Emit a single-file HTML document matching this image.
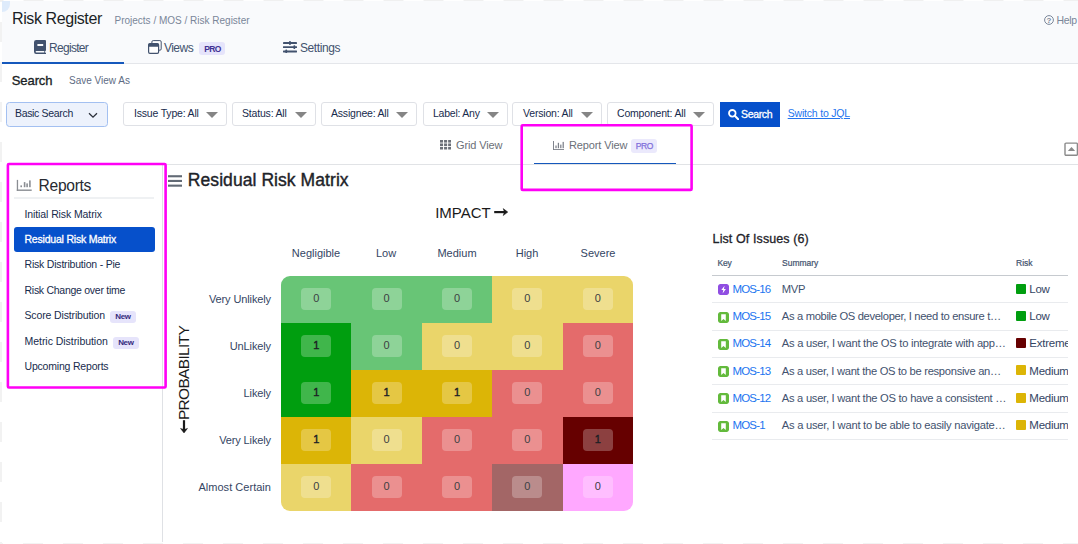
<!DOCTYPE html>
<html>
<head>
<meta charset="utf-8">
<title>Risk Register</title>
<style>
*{box-sizing:border-box;margin:0;padding:0}
html,body{width:1078px;height:544px;overflow:hidden;background:#fff}
body{font-family:"Liberation Sans",sans-serif;color:#172b4d;position:relative}
.abs{position:absolute;white-space:nowrap}
#hdr{left:2px;top:1px;width:1076px;height:63px;background:#f9fafc;border-bottom:1px solid #e4e6ea}
#corner{left:2px;top:1px;width:8px;height:11px;background:#deebfb;border-bottom-right-radius:9px}
#title{left:12px;top:9px;font-size:16px;line-height:20px;color:#1b1f26;letter-spacing:-0.41px}
#crumb{left:114.5px;top:14.7px;font-size:10px;line-height:12px;color:#7a8699}
#help{left:1056.5px;top:14px;font-size:10.5px;line-height:12px;color:#7a8699;letter-spacing:-0.3px}
.tab{font-size:12px;line-height:14px;color:#42526e;top:40.7px;letter-spacing:-0.4px}
#tabline{left:2px;top:62px;width:122px;height:2px;background:#1558bc}
.pro{display:inline-block;background:#e6e4fb;color:#403294;font-size:8.5px;font-weight:bold;letter-spacing:-0.7px;line-height:14px;height:13.4px;padding:0 4.700px 0 5.200px;border-radius:3px;vertical-align:-0.3px;margin-left:6px}
#search{left:11.8px;top:73px;font-size:13px;line-height:15px;color:#1b1f26;-webkit-text-stroke:0.35px #1b1f26;letter-spacing:-0.1px}
#saveas{left:69px;top:75px;font-size:10px;line-height:12px;color:#5e6c84}
.dd{top:102px;height:24px;letter-spacing:-0.19px;border:1px solid #dfe1e6;border-radius:3px;background:#fff;font-size:10.5px;line-height:21px;color:#172b4d;padding-left:10px}
.dd i{position:absolute;right:8px;top:9px;width:0;height:0;border-left:6px solid transparent;border-right:6px solid transparent;border-top:6px solid #858585}
#basic{left:6px;top:102px;width:102px;height:25px;border:1px solid #a3c0f1;border-radius:3.5px;background:#edf2fc;font-size:10.5px;line-height:21px;padding-left:8px;color:#172b4d;letter-spacing:-0.33px}
#sbtn{left:720px;top:102px;width:60px;height:25px;background:#0650cb;color:#fff;font-size:10.5px;-webkit-text-stroke:0.3px #fff;letter-spacing:-0.35px;line-height:24px;text-align:left;padding-left:21px}
#jql{left:787.7px;top:107px;font-size:10.5px;line-height:13px;color:#2474ee;text-decoration:underline;letter-spacing:-0.19px}
.vt{font-size:11px;line-height:14px;color:#6b6f78;top:138px;letter-spacing:-0.12px}
#hline{left:165px;top:164px;width:913px;height:1px;background:#e1e3e6}
#vline{left:162px;top:165px;width:1px;height:377px;background:#dfe1e5}
.mg{border:2px solid #ff14ec;background:transparent}
#rep{left:38.6px;top:176.6px;letter-spacing:-0.3px;font-size:15.6px;line-height:18px;color:#262a31}
#repline{left:14px;top:197.2px;width:140.400px;height:1.700px;background:#eff1f3}
.mi{left:24.5px;font-size:10.5px;line-height:13px;color:#172b4d}
#sel{left:14.1px;top:226.9px;width:140.500px;height:25.400px;background:#0650cb;border-radius:3px}
.new{display:inline-block;background:#e6e4fb;color:#352c7e;font-size:8px;font-weight:bold;letter-spacing:-0.3px;line-height:12.5px;height:12.2px;padding:0 5.500px 0 5.200px;border-radius:3px;vertical-align:0px;margin-left:5.200px}
#mtitle{left:187.8px;top:170px;font-size:17.5px;line-height:21px;color:#1e2329;-webkit-text-stroke:0.4px #1e2329;letter-spacing:0.07px}
#impact{left:435.2px;top:203.5px;font-size:15px;line-height:18px;color:#1a1a1a;letter-spacing:0}
.cl{top:247px;width:70px;text-align:center;font-size:11px;line-height:13px;color:#344563}
.rl{left:171px;width:100px;text-align:right;font-size:11px;line-height:13px;color:#344563;letter-spacing:-0.12px}
#prob{left:124px;top:364.2px;width:120px;height:18px;text-align:center;font-size:15.5px;line-height:18px;color:#1a1a1a;letter-spacing:-0.68px;transform:rotate(-90deg);transform-origin:center}
#mx{left:281px;top:276px;width:352px;height:235px;border-radius:9px;overflow:hidden}
#mx div{position:absolute}
#mx b{position:absolute;width:30px;height:21.300px;border-radius:4px;background:rgba(255,255,255,.25);font-size:11px;line-height:21px;text-align:center;font-weight:normal;color:#3c4043}
#mx b.o{-webkit-text-stroke:0.4px #1d2125;color:#1d2125}
#loi{left:712.6px;top:232px;letter-spacing:0.1px;font-size:12.5px;line-height:15px;color:#1e2329;-webkit-text-stroke:0.3px #1e2329}
.th{top:258px;font-size:8.5px;line-height:11px;color:#42526e;-webkit-text-stroke:0.2px #42526e}
#thl{left:712px;top:274.6px;width:356px;height:1.700px;background:#c6cacf}
.rw{left:712px;width:356px;height:1px;background:#e9ebee}
.k{left:732.4px;font-size:11.5px;line-height:14px;color:#1c74f0;letter-spacing:-0.8px}
.s{left:781.8px;font-size:11.2px;line-height:14px;color:#42526e;letter-spacing:-0.23px}
.r{left:1029.3px;width:38.7px;overflow:hidden;font-size:11.5px;line-height:14px;color:#344563;letter-spacing:-0.25px}
.sq{left:1016.2px;width:9.8px;height:9.8px;border-radius:1px}
.ic{left:718px;width:11px;height:11px;border-radius:2px}
</style>
</head>
<body>
<div class="abs" style="left:0;top:0;width:1.8px;height:544px;background:linear-gradient(to bottom,#fff 0,#fff 50%,#f2f2f2 50%,#f2f2f2 100%);background-size:100% 40px;background-position:0 2px"></div>
<div class="abs" style="left:0;top:0;width:1078px;height:1px;background:linear-gradient(to right,#fff 0,#fff 50%,#f0f0f0 50%,#f0f0f0 100%);background-size:40px 100%;background-position:3.5px 0"></div>
<div class="abs" style="left:0;top:542.6px;width:1078px;height:1.4px;background:linear-gradient(to right,#fff 0,#fff 50%,#f3f3f3 50%,#f3f3f3 100%);background-size:40px 100%;background-position:3px 0"></div>
<div id="hdr" class="abs"></div>
<div id="corner" class="abs"></div>
<div id="title" class="abs">Risk Register</div>
<div id="crumb" class="abs">Projects / MOS / Risk Register</div>
<svg class="abs" style="left:1044px;top:15px" width="10" height="10" viewBox="0 0 10 10"><circle cx="5" cy="5" r="4.4" fill="none" stroke="#7a8699" stroke-width="1"/><text x="5" y="7.900" font-size="8" font-family="Liberation Sans" font-weight="bold" text-anchor="middle" fill="#7a8699">?</text></svg>
<div id="help" class="abs">Help</div>

<!-- tabs -->
<svg class="abs" style="left:34px;top:40px" width="12" height="14" viewBox="0 0 12 14"><path d="M2.200 0h8.800a1 1 0 0 1 1 1v9.300a.8.8 0 0 1-.8.800v1.600h.8v1.300H2.200a2.200 2.200 0 0 1-2.200-2.200V2.200a2.200 2.200 0 0 1 2.200-2.200zM2.400 11a.8.800 0 0 0 0 1.600H10.300v-1.600zM3.400 4v2h5.800V4z" fill="#42526e" fill-rule="evenodd"/></svg>
<div class="abs tab" style="left:49px;letter-spacing:-0.69px">Register</div>
<svg class="abs" style="left:147.500px;top:40.300px" width="14" height="14" viewBox="0 0 14 14"><rect x="3.900" y="0.600" width="9.300" height="9.600" rx="1.300" fill="#fdfdfe" stroke="#42526e" stroke-width="1"/><rect x="0.600" y="3.500" width="10" height="9.800" rx="1.300" fill="#fff" stroke="#42526e" stroke-width="1.200"/><path d="M0.600 6.700V4.800a1.300 1.300 0 0 1 1.300-1.300h7.400a1.300 1.300 0 0 1 1.300 1.300V6.700z" fill="#42526e"/></svg>
<div class="abs tab" style="left:164px;letter-spacing:-0.54px">Views<span class="pro">PRO</span></div>
<svg class="abs" style="left:283.300px;top:41px" width="14" height="12" viewBox="0 0 14 12"><g fill="#42526e"><rect x="0" y="1" width="14" height="1.900" rx=".4"/><rect x="0" y="5.200" width="14" height="1.900" rx=".4"/><rect x="0" y="9.600" width="14" height="1.900" rx=".4"/><rect x="6.100" y="0" width="1.700" height="3.900" rx=".6"/><rect x="10.500" y="4.200" width="1.700" height="3.900" rx=".6"/><rect x="2.400" y="8.600" width="1.700" height="3.400" rx=".6"/></g></svg>
<div class="abs tab" style="left:300px;letter-spacing:-0.42px">Settings</div>
<div id="tabline" class="abs"></div>

<div id="search" class="abs">Search</div>
<div id="saveas" class="abs">Save View As</div>

<div id="basic" class="abs">Basic Search<svg style="position:absolute;left:81px;top:9px" width="10" height="7" viewBox="0 0 10 7"><path d="M1 1.200l4 4 4-4" fill="none" stroke="#2a2f3a" stroke-width="1.250"/></svg></div>
<div class="abs dd" style="left:123px;width:104px">Issue Type: All<i></i></div>
<div class="abs dd" style="left:232px;width:83.500px;padding-left:9px">Status: All<i></i></div>
<div class="abs dd" style="left:321px;width:96px;padding-left:9px">Assignee: All<i></i></div>
<div class="abs dd" style="left:423px;width:85px;padding-left:9px;letter-spacing:-0.24px">Label: Any<i></i></div>
<div class="abs dd" style="left:512px;width:90px">Version: All<i></i></div>
<div class="abs dd" style="left:607px;width:107px;padding-left:9px">Component: All<i></i></div>
<div id="sbtn" class="abs">Search<svg style="position:absolute;left:8px;top:7px" width="11" height="11" viewBox="0 0 11 11"><circle cx="4.300" cy="4.300" r="3.300" fill="none" stroke="#fff" stroke-width="1.800"/><path d="M6.800 6.800l3.400 3.400" stroke="#fff" stroke-width="2" stroke-linecap="round"/></svg></div>
<div id="jql" class="abs">Switch to JQL</div>

<!-- view tabs -->
<svg class="abs" style="left:440px;top:140.200px" width="11.200" height="9.500" viewBox="0 0 11 11" preserveAspectRatio="none"><g fill="#6b6f78"><rect x="0" y="0" width="3" height="3"/><rect x="4" y="0" width="3" height="3"/><rect x="8" y="0" width="3" height="3"/><rect x="0" y="4" width="3" height="3"/><rect x="4" y="4" width="3" height="3"/><rect x="8" y="4" width="3" height="3"/><rect x="0" y="8" width="3" height="3"/><rect x="4" y="8" width="3" height="3"/><rect x="8" y="8" width="3" height="3"/></g></svg>
<div class="abs vt" style="left:456px">Grid View</div>
<svg class="abs" style="left:552.5px;top:140.500px" width="11.500" height="9" viewBox="0 0 12 10" preserveAspectRatio="none"><g fill="#7b7f88"><rect x="0" y="0" width="1" height="10"/><rect x="0" y="9" width="12" height="1"/><rect x="2.500" y="5" width="1.300" height="3"/><rect x="5" y="2" width="1.300" height="6"/><rect x="7.500" y="4" width="1.300" height="4"/><rect x="10" y="1" width="1.300" height="7"/></g></svg>
<div class="abs vt" style="left:569px">Report View<span class="pro" style="background:#ebe9fc;color:#8270db;font-weight:normal;-webkit-text-stroke:0.25px #8270db;font-size:8.5px;letter-spacing:-0.4px;margin-left:3.500px;padding:0 4.300px 0 4.800px">PRO</span></div>
<div class="abs" style="left:533.5px;top:162.6px;width:142.5px;height:1.7px;background:#1558bc"></div>
<div id="hline" class="abs"></div>
<div id="vline" class="abs"></div>
<svg class="abs" style="left:1062px;top:140px" width="16" height="18" viewBox="0 0 16 18"><rect x="3" y="3.100" width="12.400" height="12.200" rx="1" fill="#fff" stroke="#8a8a8a" stroke-width="1.400"/><path d="M5.800 11.100l3.700-4.200 3.700 4.200z" fill="#8a8a8a"/></svg>

<!-- magenta highlight boxes -->
<svg class="abs" style="left:0;top:0" width="1078" height="544" viewBox="0 0 1078 544"><rect x="521.700" y="125.200" width="169.900" height="64.700" rx="1" fill="none" stroke="#ff00f6" stroke-width="2.600"/><rect x="7.900" y="164" width="157.700" height="223.500" rx="1" fill="none" stroke="#ff00f6" stroke-width="2.600"/></svg>

<!-- sidebar -->
<svg class="abs" style="left:16px;top:179px" width="17" height="13" viewBox="0 0 17 13"><g fill="#8a8d93"><rect x="0.800" y="0.900" width="1.300" height="11"/><rect x="0.800" y="10.500" width="14.900" height="1.400"/><rect x="4.400" y="6.400" width="1.600" height="1.800"/><rect x="7.800" y="3.100" width="1.600" height="5.100"/><rect x="10.300" y="4.400" width="1.600" height="3.800"/><rect x="13.100" y="1.400" width="1.600" height="6.800"/></g></svg>
<div id="rep" class="abs">Reports</div>
<div id="repline" class="abs"></div>
<div id="sel" class="abs"></div>
<div class="abs mi" style="top:208px;letter-spacing:-0.1px">Initial Risk Matrix</div>
<div class="abs mi" style="top:233px;color:#fff;-webkit-text-stroke:0.3px #fff;letter-spacing:-0.21px">Residual Risk Matrix</div>
<div class="abs mi" style="top:258px;letter-spacing:-0.2px">Risk Distribution - Pie</div>
<div class="abs mi" style="top:284px;letter-spacing:-0.27px">Risk Change over time</div>
<div class="abs mi" style="top:309px;letter-spacing:-0.14px">Score Distribution<span class="new">New</span></div>
<div class="abs mi" style="top:334.5px;letter-spacing:-0.04px">Metric Distribution<span class="new">New</span></div>
<div class="abs mi" style="top:359.5px;letter-spacing:-0.19px">Upcoming Reports</div>

<!-- matrix title -->
<svg class="abs" style="left:168px;top:175px" width="14" height="12" viewBox="0 0 14 12"><g fill="#626a75"><rect x="0" y="0.200" width="14" height="2.100"/><rect x="0" y="4.900" width="14" height="2.100"/><rect x="0" y="9.600" width="14" height="2.100"/></g></svg>
<div id="mtitle" class="abs">Residual Risk Matrix</div>
<div id="impact" class="abs">IMPACT</div>
<svg class="abs" style="left:492px;top:206px" width="18" height="12" viewBox="0 0 18 12"><path d="M2.200 6.100H13.500" stroke="#1a1a1a" stroke-width="2.200" fill="none"/><path d="M11.200 2.600L15.800 6.100L11.200 9.600L12.400 6.100z" fill="#1a1a1a" stroke="#1a1a1a" stroke-width="0.500" stroke-linejoin="round"/></svg>
<div class="abs cl" style="left:281px">Negligible</div>
<div class="abs cl" style="left:351px">Low</div>
<div class="abs cl" style="left:422px">Medium</div>
<div class="abs cl" style="left:492px">High</div>
<div class="abs cl" style="left:563px">Severe</div>
<div class="abs rl" style="top:293px">Very Unlikely</div>
<div class="abs rl" style="top:340px">UnLikely</div>
<div class="abs rl" style="top:387px">Likely</div>
<div class="abs rl" style="top:434px">Very Likely</div>
<div class="abs rl" style="top:481px;letter-spacing:0.03px">Almost Certain</div>
<div id="prob" class="abs">PROBABILITY</div>
<svg class="abs" style="left:177.600px;top:418px" width="12" height="18" viewBox="0 0 12 18"><path d="M6 2.200V13" stroke="#1a1a1a" stroke-width="2.200" fill="none"/><path d="M2.500 10.400L6 15L9.500 10.400L6 11.600z" fill="#1a1a1a" stroke="#1a1a1a" stroke-width="0.500" stroke-linejoin="round"/></svg>

<div id="mx" class="abs">
<!-- row 1 -->
<div style="left:0;top:0;width:70px;height:47px;background:#68c576"><b style="left:20.2px;top:12.300px">0</b></div>
<div style="left:70px;top:0;width:71px;height:47px;background:#68c576"><b style="left:20.6px;top:12.300px">0</b></div>
<div style="left:141px;top:0;width:70px;height:47px;background:#68c576"><b style="left:20px;top:12.300px">0</b></div>
<div style="left:211px;top:0;width:71px;height:47px;background:#ead56a"><b style="left:20.4px;top:12.300px">0</b></div>
<div style="left:282px;top:0;width:70px;height:47px;background:#ead56a"><b style="left:19.8px;top:12.300px">0</b></div>
<!-- row 2 -->
<div style="left:0;top:47px;width:70px;height:47px;background:#009e0f"><b class="o" style="left:20.2px;top:12.300px">1</b></div>
<div style="left:70px;top:47px;width:71px;height:47px;background:#68c576"><b style="left:20.6px;top:12.300px">0</b></div>
<div style="left:141px;top:47px;width:70px;height:47px;background:#ead56a"><b style="left:20px;top:12.300px">0</b></div>
<div style="left:211px;top:47px;width:71px;height:47px;background:#ead56a"><b style="left:20.4px;top:12.300px">0</b></div>
<div style="left:282px;top:47px;width:70px;height:47px;background:#e46b6b"><b style="left:19.8px;top:12.300px">0</b></div>
<!-- row 3 -->
<div style="left:0;top:94px;width:70px;height:47px;background:#009e0f"><b class="o" style="left:20.2px;top:12.300px">1</b></div>
<div style="left:70px;top:94px;width:71px;height:47px;background:#dcb506"><b class="o" style="left:20.6px;top:12.300px">1</b></div>
<div style="left:141px;top:94px;width:70px;height:47px;background:#dcb506"><b class="o" style="left:20px;top:12.300px">1</b></div>
<div style="left:211px;top:94px;width:71px;height:47px;background:#e46b6b"><b style="left:20.4px;top:12.300px">0</b></div>
<div style="left:282px;top:94px;width:70px;height:47px;background:#e46b6b"><b style="left:19.8px;top:12.300px">0</b></div>
<!-- row 4 -->
<div style="left:0;top:141px;width:70px;height:47px;background:#dcb506"><b class="o" style="left:20.2px;top:12.300px">1</b></div>
<div style="left:70px;top:141px;width:71px;height:47px;background:#ead56a"><b style="left:20.6px;top:12.300px">0</b></div>
<div style="left:141px;top:141px;width:70px;height:47px;background:#e46b6b"><b style="left:20px;top:12.300px">0</b></div>
<div style="left:211px;top:141px;width:71px;height:47px;background:#e46b6b"><b style="left:20.4px;top:12.300px">0</b></div>
<div style="left:282px;top:141px;width:70px;height:47px;background:#660000"><b class="o" style="left:19.8px;top:12.300px">1</b></div>
<!-- row 5 -->
<div style="left:0;top:188px;width:70px;height:47px;background:#ead56a"><b style="left:20.2px;top:12.300px">0</b></div>
<div style="left:70px;top:188px;width:71px;height:47px;background:#e46b6b"><b style="left:20.6px;top:12.300px">0</b></div>
<div style="left:141px;top:188px;width:70px;height:47px;background:#e46b6b"><b style="left:20px;top:12.300px">0</b></div>
<div style="left:211px;top:188px;width:71px;height:47px;background:#a36666"><b style="left:20.4px;top:12.300px">0</b></div>
<div style="left:282px;top:188px;width:70px;height:47px;background:#ffa8ff"><b style="left:19.8px;top:12.300px">0</b></div>
</div>

<!-- issues list -->
<div id="loi" class="abs">List Of Issues (6)</div>
<div class="abs th" style="left:717.6px;letter-spacing:-0.3px">Key</div>
<div class="abs th" style="left:782px">Summary</div>
<div class="abs th" style="left:1016px">Risk</div>
<div id="thl" class="abs"></div>

<div class="abs rw" style="top:302.3px"></div>
<div class="abs rw" style="top:329.6px"></div>
<div class="abs rw" style="top:357px"></div>
<div class="abs rw" style="top:384.3px"></div>
<div class="abs rw" style="top:411.6px"></div>
<div class="abs rw" style="top:439px"></div>

<svg class="abs ic" style="top:284px" viewBox="0 0 11 11"><rect width="11" height="11" rx="2" fill="#904ee2"/><path d="M6.600 1.700L3.300 6.100h2l-.7 3.300 3.300-4.500H5.900z" fill="#fff"/></svg>
<div class="abs k" style="top:282px">MOS-16</div>
<div class="abs s" style="top:282px;letter-spacing:-0.35px">MVP</div>
<div class="abs sq" style="top:284px;background:#009e0f"></div>
<div class="abs r" style="top:282px">Low</div>

<svg class="abs ic" style="top:311.5px" viewBox="0 0 11 11"><rect width="11" height="11" rx="2" fill="#63ba3c"/><path d="M3.200 2.300h4.600v6.600l-2.300-2-2.300 2z" fill="#fff"/></svg>
<div class="abs k" style="top:309px">MOS-15</div>
<div class="abs s" style="top:309px;letter-spacing:-0.33px">As a mobile OS developer, I need to ensure t…</div>
<div class="abs sq" style="top:311px;background:#009e0f"></div>
<div class="abs r" style="top:309px">Low</div>

<svg class="abs ic" style="top:338.8px" viewBox="0 0 11 11"><rect width="11" height="11" rx="2" fill="#63ba3c"/><path d="M3.200 2.300h4.600v6.600l-2.300-2-2.300 2z" fill="#fff"/></svg>
<div class="abs k" style="top:336px">MOS-14</div>
<div class="abs s" style="top:336px;letter-spacing:-0.25px">As a user, I want the OS to integrate with app…</div>
<div class="abs sq" style="top:338px;background:#660000"></div>
<div class="abs r" style="top:336px">Extreme</div>

<svg class="abs ic" style="top:366px" viewBox="0 0 11 11"><rect width="11" height="11" rx="2" fill="#63ba3c"/><path d="M3.200 2.300h4.600v6.600l-2.300-2-2.300 2z" fill="#fff"/></svg>
<div class="abs k" style="top:364px">MOS-13</div>
<div class="abs s" style="top:364px;letter-spacing:-0.3px">As a user, I want the OS to be responsive an…</div>
<div class="abs sq" style="top:365.3px;background:#dcb506"></div>
<div class="abs r" style="top:364px">Medium</div>

<svg class="abs ic" style="top:393.4px" viewBox="0 0 11 11"><rect width="11" height="11" rx="2" fill="#63ba3c"/><path d="M3.200 2.300h4.600v6.600l-2.300-2-2.300 2z" fill="#fff"/></svg>
<div class="abs k" style="top:391px">MOS-12</div>
<div class="abs s" style="top:391px;letter-spacing:-0.28px">As a user, I want the OS to have a consistent …</div>
<div class="abs sq" style="top:393px;background:#dcb506"></div>
<div class="abs r" style="top:391px">Medium</div>

<svg class="abs ic" style="top:420.7px" viewBox="0 0 11 11"><rect width="11" height="11" rx="2" fill="#63ba3c"/><path d="M3.200 2.300h4.600v6.600l-2.300-2-2.300 2z" fill="#fff"/></svg>
<div class="abs k" style="top:418px">MOS-1</div>
<div class="abs s" style="top:418px;letter-spacing:-0.25px">As a user, I want to be able to easily navigate…</div>
<div class="abs sq" style="top:420px;background:#dcb506"></div>
<div class="abs r" style="top:418px">Medium</div>

</body>
</html>
